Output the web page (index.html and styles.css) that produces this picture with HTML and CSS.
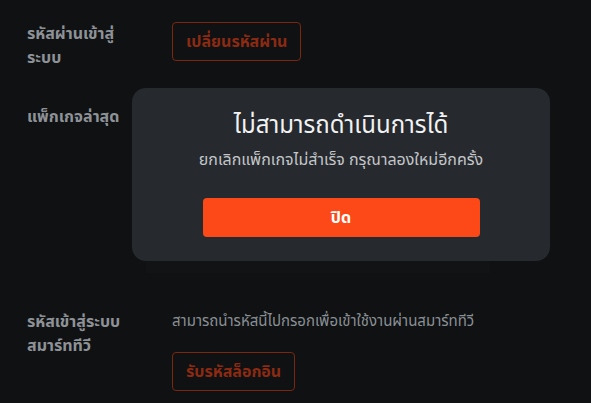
FILE: index.html
```html
<!DOCTYPE html>
<html lang="th">
<head>
<meta charset="utf-8">
<link rel="stylesheet" href="styles.css">
</head>
<body>
<main class="settings">
  <section class="row row-password">
    <div class="label">รหัสผ่านเข้าสู่<br>ระบบ</div>
    <div class="content">
      <button class="outline-btn">เปลี่ยนรหัสผ่าน</button>
    </div>
  </section>
  <section class="row row-package">
    <div class="label">แพ็กเกจล่าสุด</div>
    <div class="content">
      <div class="package-card"></div>
    </div>
  </section>
  <section class="row row-tv">
    <div class="label">รหัสเข้าสู่ระบบ<br>สมาร์ททีวี</div>
    <div class="content">
      <p class="desc">สามารถนำรหัสนี้ไปกรอกเพื่อเข้าใช้งานผ่านสมาร์ททีวี</p>
      <button class="outline-btn">รับรหัสล็อกอิน</button>
    </div>
  </section>
</main>
<div class="overlay">
  <div class="modal">
    <h2 class="modal-title">ไม่สามารถดำเนินการได้</h2>
    <p class="modal-text">ยกเลิกแพ็กเกจไม่สำเร็จ กรุณาลองใหม่อีกครั้ง</p>
    <button class="primary-btn">ปิด</button>
  </div>
</div>
</body>
</html>
```
FILE: styles.css
```css
* { box-sizing: border-box; }
html, body { margin: 0; height: 100%; }
body {
  background: #0f1113;
  font-family: "Noto Sans Thai", "Noto Sans Thai UI", "Noto Sans", sans-serif;
  overflow: hidden;
}
.settings {
  padding: 22px 0 0 27px;
  display: flex;
  flex-direction: column;
}
.row {
  display: flex;
}
.row-package { margin-top: 35px; }
.row-tv { margin-top: 37px; }
.label {
  width: 145px;
  flex: none;
  color: #8e9297;
  font-weight: 700;
  font-size: 16px;
  line-height: 24px;
}
.content {
  display: flex;
  flex-direction: column;
  align-items: flex-start;
}
.outline-btn {
  background: transparent;
  border: 1px solid #7a2710;
  border-radius: 4px;
  color: #8c2a12;
  font-family: inherit;
  font-weight: 700;
  font-size: 16px;
  height: 39px;
  padding: 0 13px;
}
.package-card {
  margin-left: -26px;
  width: 344px;
  height: 168px;
  background: #121315;
}
.desc {
  margin: 0;
  color: #8a8f94;
  font-size: 15px;
  line-height: 24px;
}
.row-tv .outline-btn { margin-top: 18px; }
.overlay {
  position: fixed;
  inset: 0;
}
.modal {
  position: absolute;
  left: 132px;
  top: 88px;
  width: 418px;
  height: 173px;
  background: #26292d;
  border-radius: 14px;
  padding: 22px 0 0;
  display: flex;
  flex-direction: column;
  align-items: center;
}
.modal-title {
  margin: 0;
  color: #f1f2f3;
  font-size: 24px;
  font-weight: 400;
  line-height: 32px;
}
.modal-text {
  margin: 7px 0 0;
  color: #c3c6ca;
  font-size: 16px;
  line-height: 22px;
}
.primary-btn {
  margin-top: 27px;
  width: 277px;
  height: 39px;
  border: none;
  border-radius: 4px;
  background: #fc4917;
  color: #ffffff;
  font-family: inherit;
  font-weight: 700;
  font-size: 16px;
}
```
